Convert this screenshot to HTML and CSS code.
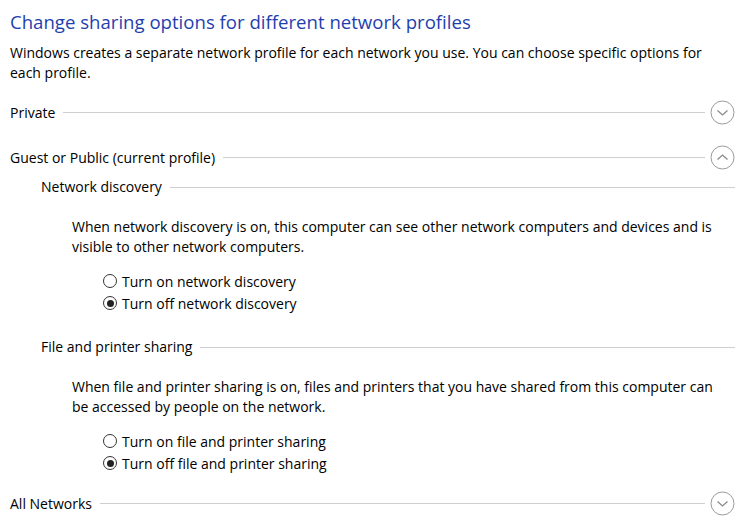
FILE: index.html
```html
<!DOCTYPE html>
<html lang="en">
<head>
  <meta charset="UTF-8" />
  <title>Advanced sharing settings</title>
  <link rel="stylesheet" href="styles.css">
</head>
<body>
  <div id="page">
    <h1>Change sharing options for different network profiles</h1>
    <p class="intro">Windows creates a separate network profile for each network you use. You can choose specific options for each profile.</p>

    <div class="profile">
      <span>Private</span>
      <span class="rule"></span>
      <span class="toggle">
        <svg width="25" height="25" viewBox="0 0 25 25"><circle cx="12.5" cy="12.5" r="11.5" fill="none" stroke="#9a9a9a" stroke-width="1"/><path d="M7.5 10.5 L12.5 15 L17.5 10.5" fill="none" stroke="#8a8a8a" stroke-width="1.3"/></svg>
      </span>
    </div>

    <div class="profile open">
      <span>Guest or Public (current profile)</span>
      <span class="rule"></span>
      <span class="toggle">
        <svg width="25" height="25" viewBox="0 0 25 25"><circle cx="12.5" cy="12.5" r="11.5" fill="none" stroke="#9a9a9a" stroke-width="1"/><path d="M7.5 14.5 L12.5 10 L17.5 14.5" fill="none" stroke="#8a8a8a" stroke-width="1.3"/></svg>
      </span>
    </div>

    <div class="section">
      <div class="heading"><span>Network discovery</span><span class="rule"></span></div>
      <p class="desc">When network discovery is on, this computer can see other network computers and devices and is visible to other network computers.</p>
      <div class="options">
        <label class="opt"><span class="radio"></span>Turn on network discovery</label>
        <label class="opt"><span class="radio checked"></span>Turn off network discovery</label>
      </div>
    </div>

    <div class="section second">
      <div class="heading"><span>File and printer sharing</span><span class="rule"></span></div>
      <p class="desc">When file and printer sharing is on, files and printers that you have shared from this computer can be accessed by people on the network.</p>
      <div class="options">
        <label class="opt"><span class="radio"></span>Turn on file and printer sharing</label>
        <label class="opt"><span class="radio checked"></span>Turn off file and printer sharing</label>
      </div>
    </div>

    <div class="profile last">
      <span>All Networks</span>
      <span class="rule"></span>
      <span class="toggle">
        <svg width="25" height="25" viewBox="0 0 25 25"><circle cx="12.5" cy="12.5" r="11.5" fill="none" stroke="#9a9a9a" stroke-width="1"/><path d="M7.5 10.5 L12.5 15 L17.5 10.5" fill="none" stroke="#8a8a8a" stroke-width="1.3"/></svg>
      </span>
    </div>
  </div>
</body>
</html>
```

FILE: styles.css
```css
html, body {
  margin: 0;
  background: #fff;
}
body {
  font-family: 'Open Sans', 'Noto Sans', sans-serif;
  font-size: 14px;
  color: #000;
}
#page {
  padding: 10px 20px 0 10px;
  width: 725px;
}
h1 {
  margin: 0;
  font-size: 18.6px;
  font-weight: normal;
  line-height: 24px;
  color: #1f3fae;
}
.intro {
  margin: 9px 0 0;
  line-height: 20px;
}
.profile {
  display: flex;
  align-items: center;
  height: 25px;
  margin-top: 17px;
}
.profile.open {
  margin-top: 20px;
}
.profile.last {
  margin-top: 17px;
}
.rule {
  flex: 1;
  height: 1px;
  background: #cfcfcf;
  margin-left: 8px;
}
.toggle {
  display: flex;
  margin-left: 5px;
}
.section {
  padding-left: 31px;
  margin-top: 7px;
}
.section.second {
  margin-top: 23px;
}
.heading {
  display: flex;
  align-items: center;
  line-height: 20px;
}
.desc {
  margin: 20px 0 0 31px;
  width: 650px;
  line-height: 20px;
}
.options {
  margin: 13px 0 0 63px;
}
.opt {
  display: flex;
  align-items: center;
  height: 22px;
}
.radio {
  width: 12px;
  height: 12px;
  border: 1px solid #333;
  border-radius: 50%;
  margin-right: 5px;
  margin-left: -1px;
  position: relative;
  box-sizing: content-box;
}
.radio.checked::after {
  content: '';
  position: absolute;
  left: 2.5px;
  top: 2.5px;
  width: 7px;
  height: 7px;
  border-radius: 50%;
  background: #222;
}
```
